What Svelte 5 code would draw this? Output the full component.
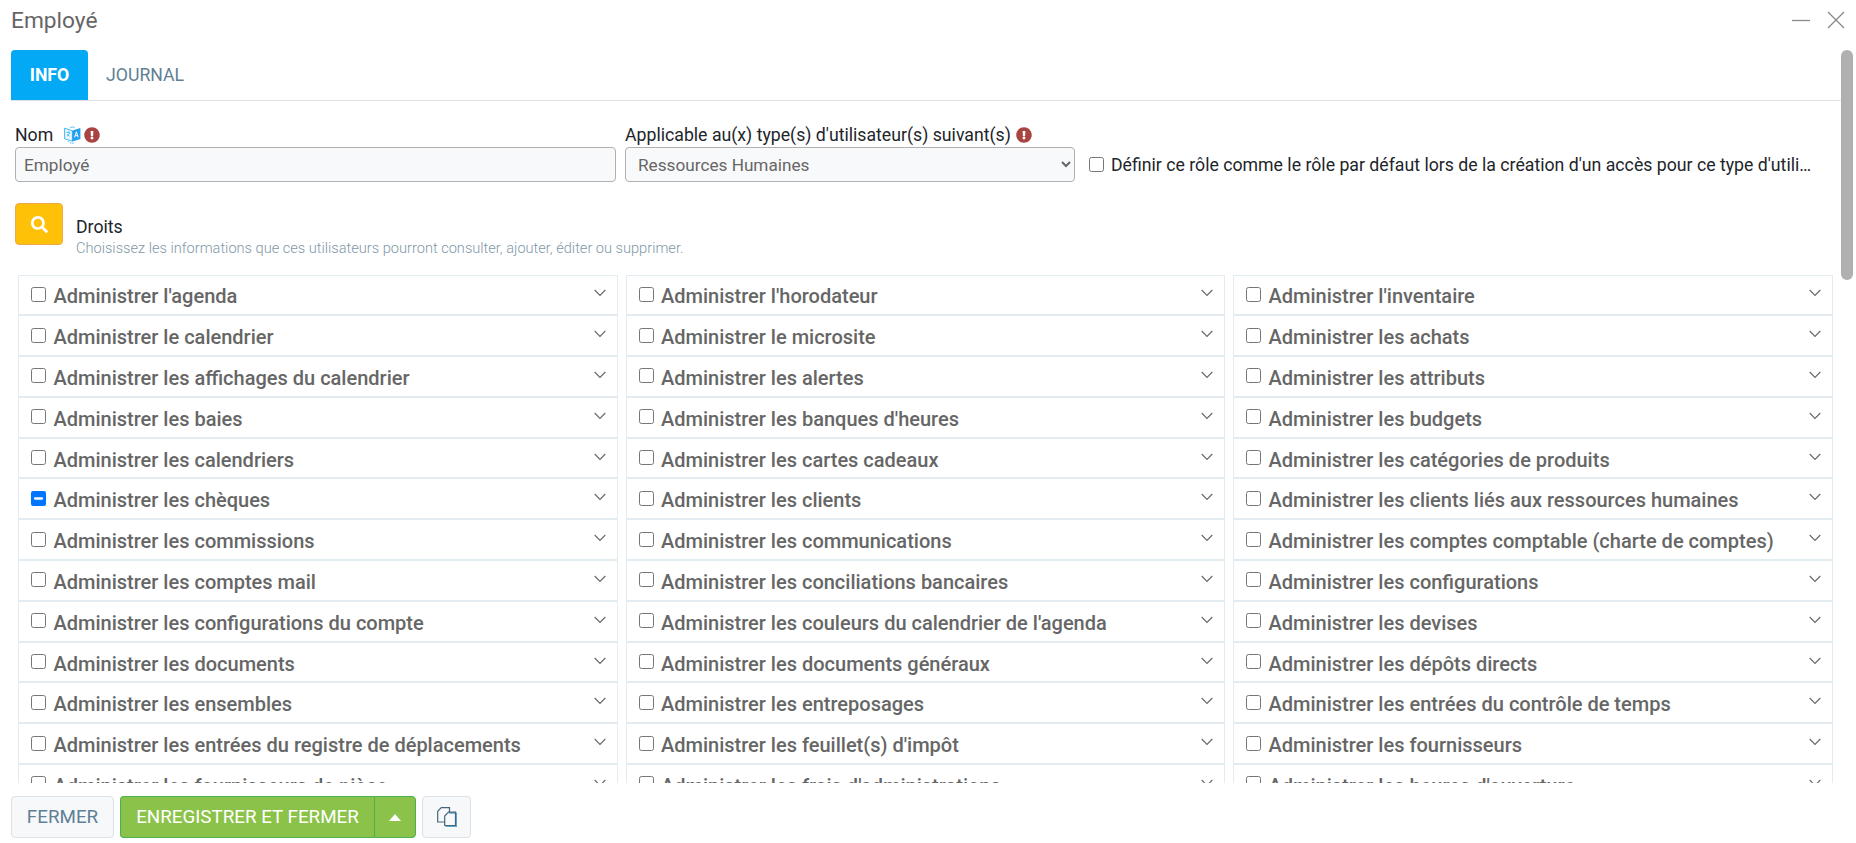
<script lang="ts">
	const droits = [
		"l'agenda", "l'horodateur", "l'inventaire",
		'le calendrier', 'le microsite', 'les achats',
		'les affichages du calendrier', 'les alertes', 'les attributs',
		'les baies', "les banques d'heures", 'les budgets',
		'les calendriers', 'les cartes cadeaux', 'les catégories de produits',
		'les chèques', 'les clients', 'les clients liés aux ressources humaines',
		'les commissions', 'les communications', 'les comptes comptable (charte de comptes)',
		'les comptes mail', 'les conciliations bancaires', 'les configurations',
		'les configurations du compte', "les couleurs du calendrier de l'agenda", 'les devises',
		'les documents', 'les documents généraux', 'les dépôts directs',
		'les ensembles', 'les entreposages', 'les entrées du contrôle de temps',
		'les entrées du registre de déplacements', "les feuillet(s) d'impôt", 'les fournisseurs',
		'les fournisseurs de pièce', "les frais d'administrations", "les heures d'ouverture"
	];
</script>

{#snippet alert()}
	<svg class="alert" viewBox="0 0 512 512" aria-hidden="true">
		<path d="M504 256c0 136.997-111.043 248-248 248S8 392.997 8 256C8 119.083 119.043 8 256 8s248 111.083 248 248zm-248 50c-25.405 0-46 20.595-46 46s20.595 46 46 46 46-20.595 46-46-20.595-46-46-46zm-43.673-165.346l7.418 136c.347 6.364 5.609 11.346 11.982 11.346h48.546c6.373 0 11.635-4.982 11.982-11.346l7.418-136c.375-6.874-5.098-12.654-11.982-12.654h-63.383c-6.884 0-12.356 5.78-11.981 12.654z" />
	</svg>
{/snippet}

<div class="window">
	<header class="title-bar">
		<h1>Employé</h1>
		<div class="window-actions">
			<svg width="18" height="18" viewBox="0 0 18 18" aria-hidden="true"><path d="M0 9.500h18" /></svg>
			<svg width="18" height="18" viewBox="0 0 18 18" aria-hidden="true"><path d="M1 1l16 16M17 1L1 17" /></svg>
		</div>
	</header>

	<div class="content">
		<nav class="tabs">
			<button class="tab active">INFO</button>
			<button class="tab">JOURNAL</button>
		</nav>

		<div class="fields">
			<div class="field name">
				<label for="nom">
					Nom
					<svg class="translate" viewBox="0 0 17 18" aria-hidden="true">
						<path d="M.6 2.200l7.800 2.600v10.400L.6 12.800z" fill="#eaf7fe" stroke="#2fb0f2" stroke-width=".9" />
						<path d="M8.400 4.600l8-2.600v11l-8 2.400z" fill="#1f9ff0" />
						<path d="M2.400 6.400h3.800M4.300 5.400v1M3 10.200c1.300-.6 2.200-1.800 2.600-3.500M3.300 8c.5 1 1.300 1.800 2.400 2.200" fill="none" stroke="#2fb0f2" stroke-width=".8" />
						<path d="M10.600 11.400l1.800-5.600 1.800 5.600M11.200 9.700h2.400" fill="none" stroke="#fff" stroke-width="1" />
						<path d="M4.200 15.200c1.300 2 3.200 2.400 5.600 1.800" fill="none" stroke="#2fb0f2" stroke-width=".9" stroke-dasharray="1.400 1" />
						<path d="M6.200 1.800c1.400-1.100 3-1.100 4.400-.2" fill="none" stroke="#2fb0f2" stroke-width=".9" />
					</svg>
					{@render alert()}
				</label>
				<input id="nom" type="text" value="Employé" />
			</div>

			<div class="field type">
				<label for="type">
					Applicable au(x) type(s) d'utilisateur(s) suivant(s)
					{@render alert()}
				</label>
				<select id="type">
					<option>Ressources Humaines</option>
				</select>
			</div>

			<label class="default-role">
				<input type="checkbox" />
				<span>Définir ce rôle comme le rôle par défaut lors de la création d'un accès pour ce type d'utilisateur</span>
			</label>
		</div>

		<section class="rights-head">
			<button class="search" aria-label="Rechercher">
				<svg width="17" height="17" viewBox="0 0 512 512" aria-hidden="true">
					<path d="M505 442.700L405.300 343c-4.500-4.500-10.600-7-17-7H372c27.600-35.300 44-79.700 44-128C416 93.100 322.900 0 208 0S0 93.100 0 208s93.100 208 208 208c48.300 0 92.700-16.400 128-44v16.300c0 6.400 2.500 12.500 7 17l99.700 99.700c9.400 9.400 24.600 9.400 33.900 0l28.300-28.300c9.400-9.400 9.400-24.600.1-34zM208 336c-70.700 0-128-57.200-128-128 0-70.700 57.200-128 128-128 70.700 0 128 57.200 128 128 0 70.700-57.200 128-128 128z" />
				</svg>
			</button>
			<div class="rights-text">
				<strong>Droits</strong>
				<small>Choisissez les informations que ces utilisateurs pourront consulter, ajouter, éditer ou supprimer.</small>
			</div>
		</section>

		<ul class="rights">
			{#each droits as droit}
				<li>
					<label>
						<input type="checkbox" indeterminate={droit === 'les chèques'} />
						<span>Administrer {droit}</span>
					</label>
					<svg class="chevron" width="12" height="8" viewBox="0 0 12 8" aria-hidden="true"><path d="M.7 1l5.300 5.500L11.300 1" /></svg>
				</li>
			{/each}
		</ul>

		<div class="thumb"></div>
	</div>

	<footer>
		<button class="btn close">FERMER</button>
		<div class="save">
			<button class="btn green">ENREGISTRER ET FERMER</button>
			<button class="btn green caret" aria-label="Plus">
				<svg width="12" height="7" viewBox="0 0 12 7" aria-hidden="true"><path d="M6 0l6 7H0z" /></svg>
			</button>
		</div>
		<button class="btn copy" aria-label="Copier">
			<svg width="20" height="20" viewBox="0 0 20 20" aria-hidden="true">
				<path d="M8 15H.7V4.300L4.300.7h8.200v4.500" />
				<path class="shade" d="M12.200 6.200h7.300v13.300H8.500" />
				<path d="M11.500 5.200h7v13.300H7.700V9z" />
			</svg>
		</button>
	</footer>
</div>

<style>
	:global(body) {
		margin: 0;
		background: #fff;
		font-family: Roboto, 'Liberation Sans', sans-serif;
	}

	.window {
		display: flex;
		flex-direction: column;
		height: 100vh;
		overflow: hidden;
		color: #333;
		font-size: 17.700px;
	}

	.title-bar {
		display: flex;
		align-items: center;
		justify-content: space-between;
		height: 50px;
		flex: none;
		padding: 0 11px 11px;
		box-sizing: border-box;
	}

	h1 {
		margin: 2px 0 0;
		font-size: 22.700px;
		font-weight: 400;
		color: #666;
	}

	.window-actions {
		display: flex;
		gap: 17px;
		align-items: center;
	}

	.window-actions path {
		stroke: #8a8a8a;
		stroke-width: 1.300;
		fill: none;
	}

	.content {
		position: relative;
		flex: 1;
		min-height: 0;
		overflow: hidden;
		padding-right: 23px;
	}

	.tabs {
		display: flex;
		height: 51px;
		margin-left: 11px;
		margin-right: -8px;
		box-sizing: border-box;
		border-bottom: 1px solid #dee2e6;
	}

	.tab {
		border: 0;
		background: none;
		font: inherit;
		color: #5f7f93;
		padding: 0 18px;
		height: 50px;
	}

	.tab.active {
		width: 77px;
		padding: 0;
		background: #03a9f4;
		color: #fff;
		font-weight: 700;
		border-radius: 4px 4px 0 0;
	}

	.fields {
		display: flex;
		align-items: flex-end;
		padding: 0 20px 0 15px;
		margin-top: 24px;
	}

	.field label {
		display: flex;
		align-items: center;
		gap: 5px;
		height: 22px;
		box-sizing: border-box;
		padding-bottom: 2px;
		color: #212529;
	}

	.field.name {
		width: 601px;
		margin-right: 9px;
	}

	.field.type {
		width: 450px;
		margin-right: 14px;
	}

	.translate {
		width: 17px;
		height: 18px;
		margin-left: 6px;
		margin-right: -2px;
	}

	.alert {
		width: 16px;
		height: 16px;
		fill: #a94442;
	}

	input[type='text'],
	select {
		display: block;
		width: 100%;
		height: 35px;
		box-sizing: border-box;
		background-color: #f8f9fa;
		border: 1px solid #b1b1b1;
		border-radius: 4px;
		font: inherit;
		font-size: 17.200px;
		color: #666;
		padding: 0 8px;
	}

	input[type='checkbox'] {
		width: 15px;
		height: 15px;
		margin: 0;
		flex: none;
	}

	.default-role {
		display: flex;
		align-items: center;
		gap: 7px;
		height: 35px;
		flex: 1;
		min-width: 0;
	}

	.default-role span {
		overflow: hidden;
		white-space: nowrap;
		text-overflow: ellipsis;
		color: #212529;
	}

	.rights-head {
		display: flex;
		align-items: flex-start;
		gap: 13px;
		margin: 21px 0 0 15px;
	}

	.search {
		width: 48px;
		height: 42px;
		padding: 0;
		display: flex;
		align-items: center;
		justify-content: center;
		background: #ffc107;
		border: 1px solid #f0a94a;
		border-radius: 4px;
	}

	.search svg {
		fill: #fff;
	}

	.rights-text {
		display: flex;
		flex-direction: column;
		padding-top: 13px;
	}

	.rights-text strong {
		font-weight: 400;
		color: #212529;
		line-height: 22px;
	}

	.rights-text small {
		font-size: 14.600px;
		line-height: 20px;
		color: #7f98a8;
		font-weight: 300;
	}

	.rights {
		list-style: none;
		margin: 16.500px 0 0;
		padding: 0 0 0 18px;
		display: grid;
		grid-template-columns: repeat(3, 599.500px);
		column-gap: 8px;
	}

	.rights li {
		display: flex;
		align-items: center;
		justify-content: space-between;
		height: 40.800px;
		box-sizing: border-box;
		padding: 3px 11px 0 12px;
		border: 1px solid #e3ecf0;
	}

	.rights label {
		display: flex;
		align-items: center;
		gap: 7.500px;
		font-size: 20px;
		font-weight: 500;
		color: #666;
	}

	.rights label input {
		position: relative;
		top: -2px;
	}

	.chevron {
		position: relative;
		top: -3px;
	}

	.chevron path {
		fill: none;
		stroke: #666;
		stroke-width: 1.100;
	}

	/* scrollbar drawn over the panel */
	.thumb {
		position: absolute;
		top: 0;
		right: 3px;
		width: 12px;
		height: 230px;
		background: #b0b0b0;
		border-radius: 6px;
	}

	footer {
		flex: none;
		display: flex;
		gap: 6px;
		height: 60px;
		box-sizing: border-box;
		padding: 13px 0 0 11px;
	}

	.btn {
		height: 42px;
		box-sizing: border-box;
		border-radius: 4px;
		font: inherit;
		font-size: 18.800px;
		padding: 0;
	}

	.close {
		width: 103px;
		background: #f6f8fa;
		border: 1px solid #dbe2e8;
		color: #5f8095;
	}

	.save {
		display: flex;
	}

	.green {
		background: #8bc34a;
		border: 1px solid #4caf50;
		color: #fff;
	}

	.save .green:first-child {
		width: 254px;
		border-radius: 4px 0 0 4px;
		border-right: 0;
	}

	.caret {
		width: 42px;
		border-radius: 0 4px 4px 0;
		display: flex;
		align-items: center;
		justify-content: center;
	}

	.caret path {
		fill: #fff;
	}

	.copy {
		width: 49px;
		background: #f6f8fa;
		border: 1px solid #dbe2e8;
		display: flex;
		align-items: center;
		justify-content: center;
	}

	.copy path {
		fill: none;
		stroke: #46657a;
		stroke-width: 1.200;
	}

	.copy path.shade {
		stroke: #58a9d6;
	}
</style>
